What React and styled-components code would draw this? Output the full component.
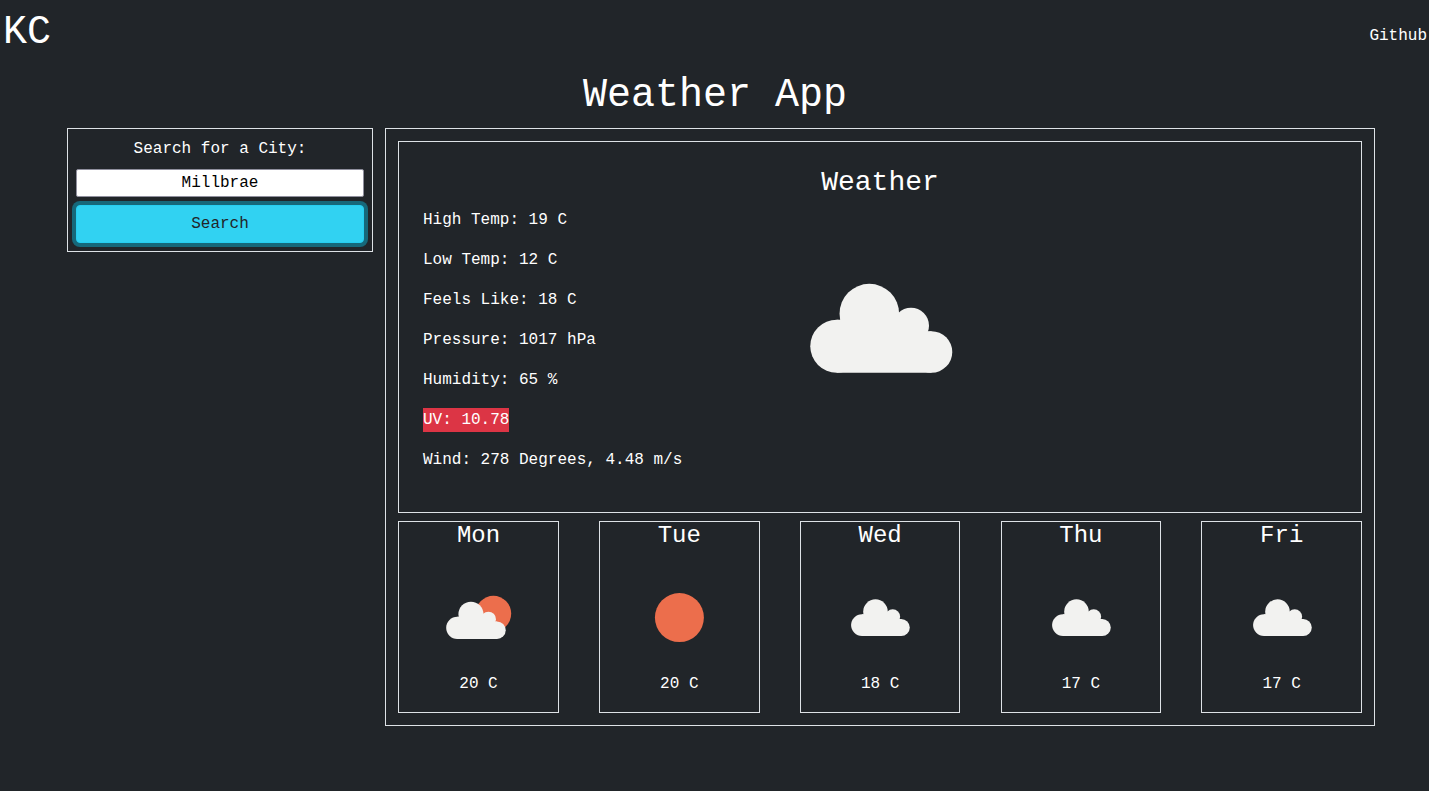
import React from "react";
import styled, { createGlobalStyle } from "styled-components";

const GlobalStyle = createGlobalStyle`
  *, *::before, *::after { box-sizing: border-box; }
  body {
    margin: 0;
    min-height: 100vh;
    background: #212529;
    color: #fff;
    font: 400 16px/1.5 "Courier New", "Liberation Mono", monospace;
  }
  h1, h3, h4, p { margin: 0; font-weight: 400; line-height: 1.2; }
`;

const Navbar = styled.nav`
  display: flex;
  justify-content: space-between;
  align-items: flex-start;
  height: 72px;
  padding: 0 2px 0 3px;
`;

const Brand = styled.a`
  margin-top: 3px;
  font-size: 40px;
  line-height: 60px;
  color: #fff;
`;

const NavLink = styled.a`
  margin-top: 24px;
  color: #fff;
`;

const Title = styled.h1`
  font-size: 40px;
  margin-bottom: 8px;
  padding-left: 1px;
  text-align: center;
`;

const Container = styled.main`
  display: grid;
  grid-template-columns: 330px 990px;
  align-items: start;
  width: 1320px;
  margin: 0 54px 0 55px;
`;

const SearchPanel = styled.form`
  display: flex;
  flex-direction: column;
  gap: 8px;
  margin: 0 12px;
  padding: 8px;
  border: 1px solid #dee2e6;
  text-align: center;
`;

const CityInput = styled.input`
  width: 100%;
  height: 28px;
  padding: 0 2px;
  border: 1px solid #8f8f9d;
  border-radius: 2px;
  background: #fff;
  color: #000;
  font: inherit;
  text-align: center;
  outline: none;
`;

const SearchButton = styled.button`
  height: 38px;
  padding: 6px 12px;
  border: 1px solid #25cff2;
  border-radius: 4px;
  background: #31d2f2;
  box-shadow: 0 0 0 4px rgba(11, 172, 204, 0.5);
  color: #212529;
  font: inherit;
`;

const Results = styled.section`
  padding: 12px;
  border: 1px solid #dee2e6;
`;

const Current = styled.article`
  margin-bottom: 8px;
  padding: 24px;
  border: 1px solid #dee2e6;
`;

const CurrentHeading = styled.h3`
  margin-bottom: 8px;
  font-size: 28px;
  text-align: center;
`;

const CurrentBody = styled.div`
  display: grid;
  grid-template-columns: 1fr 242px 1fr;
  align-items: start;
`;

const Reading = styled.p`
  margin-bottom: 16px;
  line-height: 24px;
  white-space: nowrap;
`;

const UvBadge = styled.span`
  display: inline-block;
  background: #dc3545;
`;

const Forecast = styled.div`
  display: flex;
  justify-content: space-between;
  padding-left: 0.2px;
`;

const DayCard = styled.article`
  display: flex;
  flex-direction: column;
  align-items: center;
  width: 16.6667%;
  height: 192px;
  border: 1px solid #dee2e6;
`;

const DayName = styled.h4`
  margin-bottom: 9px;
  font-size: 24px;
`;

const DayIcon = styled.div`
  height: 112.2px;
  padding-top: 8px;
`;

const DayTemp = styled.p`
  line-height: 24px;
`;

const Icon = styled.svg`
  display: block;
  width: ${(p) => p.$size}px;
  height: ${(p) => p.$size}px;
`;

function Cloud({ x, y, scale }) {
  return (
    <g transform={`translate(${x} ${y}) scale(${scale})`} fill="#f2f2f0">
      <circle cx="26.7" cy="63" r="26.5" />
      <circle cx="59.3" cy="30.4" r="29.8" />
      <circle cx="101" cy="42.5" r="18" />
      <circle cx="121.5" cy="68.7" r="20.8" />
      <path d="M26.7 36.5H59V30L101 42.5V47.9H121.5V89.5H26.7Z" />
    </g>
  );
}

function WeatherIcon({ kind, size = 100, cloudX = 21, cloudY = 32.1 }) {
  return (
    <Icon $size={size} viewBox="0 0 100 100" aria-hidden="true">
      {kind === "sun" && <circle cx="50.4" cy="50.6" r="24.5" fill="#ec6e4c" />}
      {kind === "partly" && <circle cx="64.4" cy="46.6" r="17.8" fill="#ec6e4c" />}
      {kind === "partly" && <Cloud x={17.1} y={34.4} scale={0.419} />}
      {kind === "cloud" && <Cloud x={cloudX} y={cloudY} scale={0.413} />}
    </Icon>
  );
}

const readings = [
  "High Temp: 19 C",
  "Low Temp: 12 C",
  "Feels Like: 18 C",
  "Pressure: 1017 hPa",
  "Humidity: 65 %",
];

const days = [
  { name: "Mon", icon: "partly", temp: "20 C" },
  { name: "Tue", icon: "sun", temp: "20 C" },
  { name: "Wed", icon: "cloud", temp: "18 C" },
  { name: "Thu", icon: "cloud", temp: "17 C" },
  { name: "Fri", icon: "cloud", temp: "17 C" },
];

export default function App() {
  return (
    <>
      <GlobalStyle />
      <Navbar>
        <Brand>KC</Brand>
        <NavLink>Github</NavLink>
      </Navbar>
      <Title>Weather App</Title>
      <Container>
        <SearchPanel>
          <label htmlFor="city">Search for a City:</label>
          <CityInput id="city" defaultValue="Millbrae" />
          <SearchButton type="button">Search</SearchButton>
        </SearchPanel>
        <Results>
          <Current>
            <CurrentHeading>Weather</CurrentHeading>
            <CurrentBody>
              <div>
                {readings.map((text) => (
                  <Reading key={text}>{text}</Reading>
                ))}
                <Reading>
                  <UvBadge>UV: 10.78</UvBadge>
                </Reading>
                <Reading>Wind: 278 Degrees, 4.48 m/s</Reading>
              </div>
              <WeatherIcon kind="cloud" size={242} cloudX={21.1} cloudY={31.1} />
            </CurrentBody>
          </Current>
          <Forecast>
            {days.map((day) => (
              <DayCard key={day.name}>
                <DayName>{day.name}</DayName>
                <DayIcon>
                  <WeatherIcon kind={day.icon} />
                </DayIcon>
                <DayTemp>{day.temp}</DayTemp>
              </DayCard>
            ))}
          </Forecast>
        </Results>
      </Container>
    </>
  );
}
